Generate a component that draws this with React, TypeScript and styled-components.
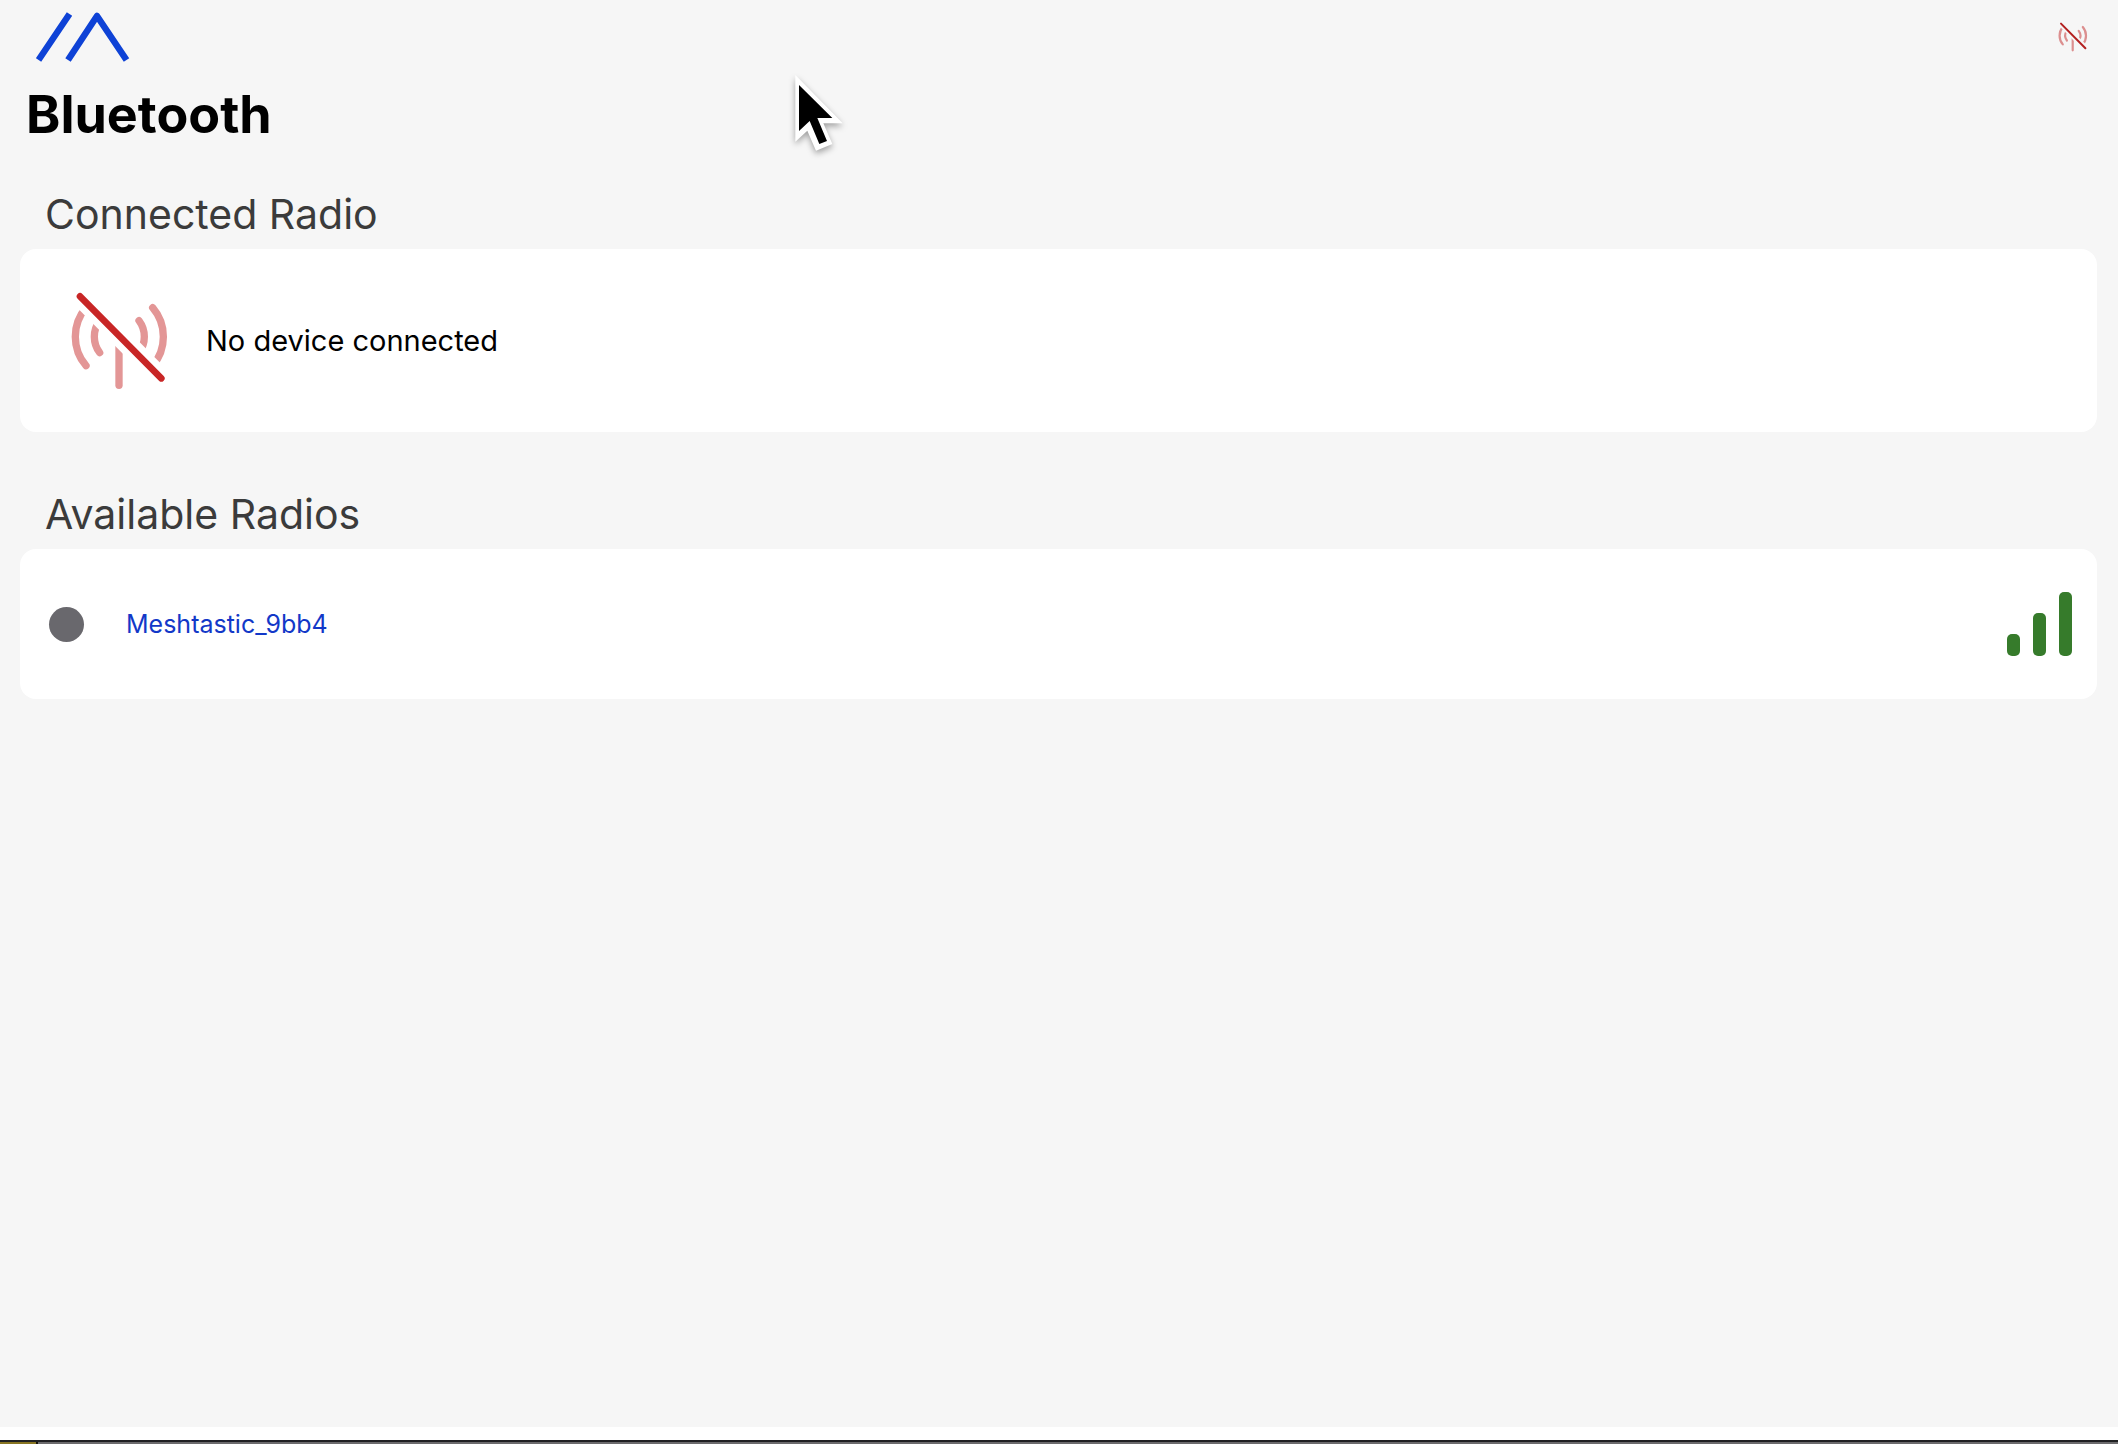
import React from "react";
import styled, { createGlobalStyle } from "styled-components";

const GlobalStyle = createGlobalStyle`
  * { box-sizing: border-box; }
  body {
    margin: 0;
    background: #f6f6f6;
    color: #000;
    font-family: Inter, "Liberation Sans", sans-serif;
  }
  h1, h2, p, ul { margin: 0; padding: 0; }
`;

const Screen = styled.div`
  position: relative;
  display: flex;
  flex-direction: column;
  min-height: 100vh;
`;

const TopBar = styled.header`
  display: flex;
  justify-content: space-between;
  align-items: center;
  height: 73px;
  padding: 0 30px 0 36px;
`;

const IconButton = styled.button`
  display: flex;
  padding: 0;
  border: 0;
  background: none;
`;

const Content = styled.main`
  flex: 1;
  display: flex;
  flex-direction: column;
  padding: 11px 21px 0 20px;
`;

const Title = styled.h1`
  padding: 0 6px;
  font-size: 52px;
  line-height: 62px;
  font-weight: 700;
`;

const Section = styled.section`
  margin-top: 40px;

  & + & { margin-top: 54px; }
`;

const SectionTitle = styled.h2`
  padding: 0 25px;
  margin-bottom: 7px;
  color: #3b3b3b;
  font-size: 41px;
  line-height: 56px;
  font-weight: 400;
`;

const Card = styled.div<{ $pad: string }>`
  display: flex;
  align-items: center;
  padding: ${(p) => p.$pad};
  border-radius: 16px;
  background: #fff;
`;

const Status = styled.p`
  padding-left: 36px;
  font-size: 29px;
  line-height: 40px;
`;

const Dot = styled.span`
  width: 35px;
  height: 35px;
  border-radius: 50%;
  background: #69686d;
`;

const RadioButton = styled.button`
  margin: 0 auto 0 42px;
  padding: 0;
  border: 0;
  background: none;
  color: #1238c8;
  font: inherit;
  font-size: 25px;
  line-height: 32px;
`;

const Signal = styled.div`
  display: flex;
  align-items: flex-end;
  gap: 13px;
`;

const Bar = styled.span<{ $level: number }>`
  width: 13px;
  height: ${(p) => p.$level * 21 + 1}px;
  border-radius: 5px;
  background: #367b2b;
`;

const WindowEdge = styled.footer`
  display: flex;
  flex-direction: column;
`;

const WhiteEdge = styled.div`
  height: 13px;
  background: #fff;
`;

const Desktop = styled.div`
  height: 4px;
  border-top: 2px solid #202022;
  background: linear-gradient(to right, #887522 36px, #17150b 36px, #17150b 38px, #6c6b6d 38px);
`;

const Pointer = styled.svg`
  position: absolute;
  left: 760px;
  top: 60px;
  overflow: visible;
  pointer-events: none;
  filter: drop-shadow(0 3px 3px rgba(0, 0, 0, 0.35));
`;

function Logo() {
  return (
    <svg width="94" height="50" viewBox="0 0 94 50" fill="none" stroke="#0e42d6" strokeWidth="6.5" strokeLinejoin="round" role="img" aria-label="Meshtastic">
      <path d="M33.5 2 L2.5 48 M32 48 L61 4 L90.5 48" />
    </svg>
  );
}

function AntennaSlash({ size, id, slash, wave }: { size: number; id: string; slash: string; wave: string }) {
  return (
    <svg width={size} height={size} viewBox="90 62 300 300" fill="none" strokeLinecap="round" aria-hidden="true">
      <mask id={id} maskUnits="userSpaceOnUse" x="80" y="50" width="320" height="320">
        <rect x="80" y="50" width="320" height="320" fill="#fff" />
        <path d="M100 58 L384 344" stroke="#000" strokeWidth="60" />
      </mask>
      <g mask={`url(#${id})`} stroke={wave} strokeWidth="22">
        <path d="M338 112 A134 134 0 0 1 338 286" />
        <path d="M138 112 A134 134 0 0 0 138 286" />
        <path d="M297 151 A80 80 0 0 1 297 247" />
        <path d="M179 151 A80 80 0 0 0 179 247" />
        <path d="M237 200 V345" />
      </g>
      <path d="M120 78 L364 324" stroke={slash} strokeWidth="20" />
    </svg>
  );
}

export default function App() {
  return (
    <Screen>
      <GlobalStyle />
      <TopBar>
        <Logo />
        <IconButton type="button" aria-label="Not connected">
          <AntennaSlash size={30} id="cut-small" slash="#b3201f" wave="#dc8f8f" />
        </IconButton>
      </TopBar>
      <Content>
        <Title>Bluetooth</Title>
        <Section>
          <SectionTitle>Connected Radio</SectionTitle>
          <Card $pad="42px 50px 41px">
            <AntennaSlash size={100} id="cut-large" slash="#c82626" wave="#e39696" />
            <Status>No device connected</Status>
          </Card>
        </Section>
        <Section>
          <SectionTitle>Available Radios</SectionTitle>
          <Card $pad="43px 25px 43px 29px">
            <Dot />
            <RadioButton type="button">Meshtastic_9bb4</RadioButton>
            <Signal role="img" aria-label="Strong signal">
              <Bar $level={1} />
              <Bar $level={2} />
              <Bar $level={3} />
            </Signal>
          </Card>
        </Section>
      </Content>
      <WindowEdge>
        <WhiteEdge />
        <Desktop />
      </WindowEdge>
      <Pointer width="120" height="110" viewBox="0 0 360 330" aria-hidden="true">
        <path d="M106 45 V245 L142 212 L168 272 L217 252 L190 190 H248 Z" fill="#fff" />
        <path d="M117 75 V213 L149 183 L178 252 L201 243 L172 174 H217 Z" fill="#000" />
      </Pointer>
    </Screen>
  );
}
